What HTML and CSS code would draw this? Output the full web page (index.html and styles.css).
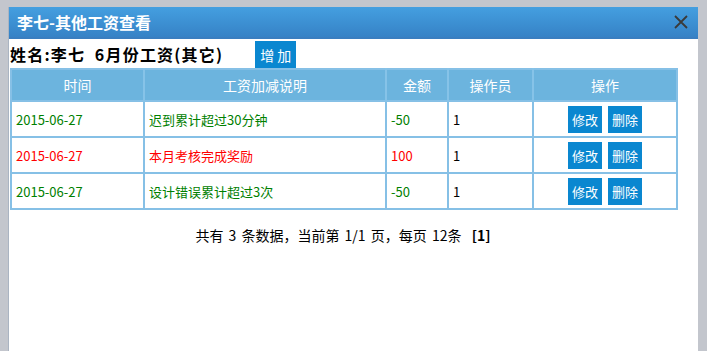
FILE: index.html
```html
<!DOCTYPE html>
<html lang="zh-CN">
<head>
  <meta charset="UTF-8" />
  <title>李七-其他工资查看</title>
  <link rel="stylesheet" href="styles.css">
</head>
<body>
  <div class="dialog">
    <div class="dialog-title">
      <span>李七-其他工资查看</span>
      <a class="close" href="#">
        <svg width="16" height="16" viewBox="0 0 16 16"><path d="M2 2L14 14M14 2L2 14" stroke="#3a3a3a" stroke-width="1.8" fill="none"/></svg>
      </a>
    </div>
    <div class="dialog-body">
      <div class="head-row">
        <h3>姓名:李七 &nbsp;6月份工资(其它)</h3>
        <button class="btn add">增 加</button>
      </div>
      <table class="grid">
        <thead>
          <tr>
            <th class="c-date">时间</th>
            <th class="c-desc">工资加减说明</th>
            <th class="c-amt">金额</th>
            <th class="c-op">操作员</th>
            <th>操作</th>
          </tr>
        </thead>
        <tbody>
          <tr class="minus">
            <td>2015-06-27</td>
            <td>迟到累计超过30分钟</td>
            <td>-50</td>
            <td class="plain">1</td>
            <td class="actions"><button class="btn">修改</button><button class="btn">删除</button></td>
          </tr>
          <tr class="plus">
            <td>2015-06-27</td>
            <td>本月考核完成奖励</td>
            <td>100</td>
            <td class="plain">1</td>
            <td class="actions"><button class="btn">修改</button><button class="btn">删除</button></td>
          </tr>
          <tr class="minus">
            <td>2015-06-27</td>
            <td>设计错误累计超过3次</td>
            <td>-50</td>
            <td class="plain">1</td>
            <td class="actions"><button class="btn">修改</button><button class="btn">删除</button></td>
          </tr>
        </tbody>
      </table>
      <p class="pager">共有 3 条数据，当前第 1/1 页，每页 12条 &nbsp;<b>[1]</b></p>
    </div>
  </div>
</body>
</html>
```

FILE: styles.css
```css
:root {
  --mask: #c3c6cd;
  --blue: #0a87d0;
  --head-blue: #6cb4de;
  --line: #86c0e6;
  --green: #008000;
  --red: #ff0000;
}
*, *::before, *::after { box-sizing: border-box; }
html, body { height: 100%; }
body {
  margin: 0;
  background: var(--mask);
  font-family: "Noto Sans CJK SC", "DejaVu Sans", sans-serif;
  color: #000;
  overflow: hidden;
}
.dialog {
  margin: 7px 0 0 8px;
  width: 690px;
  height: 400px;
  background: #fff;
  border-left: 1px solid #aab4c2;
}
.dialog-title {
  height: 32px;
  display: flex; align-items: center; justify-content: space-between;
  padding: 0 9px 0 8px;
  background: linear-gradient(#449fe0, #3682c6);
  border-bottom: 2px solid #3a7ec0;
  color: #fff;
  font-size: 16px; font-weight: bold;
}
.close { display: flex; }
.dialog-body { padding: 2px 0 0 1px; }
.head-row { display: flex; align-items: flex-end; gap: 32px; }
.head-row h3 {
  margin: 0 0 2px; font-size: 16px; font-weight: bold;
  letter-spacing: 1.2px;
}
.btn {
  border: none; background: var(--blue); color: #fff;
  font-family: inherit; font-size: 14px;
  padding: 0; cursor: pointer;
}
.btn.add { width: 41px; height: 27px; }
.grid {
  width: 668px;
  border-collapse: collapse;
  font-size: 13px;
  border: 2px solid var(--line);
}
.grid th {
  height: 32px;
  background: var(--head-blue);
  color: #fff; font-weight: normal; font-size: 14px;
  border-left: 2px solid #86c3e8;
}
.grid th:first-child { border-left: none; }
.grid td {
  height: 36px;
  padding: 0 4px;
  border: 2px solid var(--line);
}
.c-date { width: 133px; }
.c-desc { width: 242px; }
.c-amt { width: 62px; }
.c-op { width: 85px; }
.minus td { color: var(--green); }
.plus td { color: var(--red); }
.grid td.plain { color: #000; }
.actions { text-align: center; }
.actions .btn { width: 34px; height: 27px; margin: 0 3px; font-size: 13px; }
.pager {
  margin: 15px 0 0; text-align: center; font-size: 14px;
  word-spacing: 2px;
  padding-right: 22px;
}
```
